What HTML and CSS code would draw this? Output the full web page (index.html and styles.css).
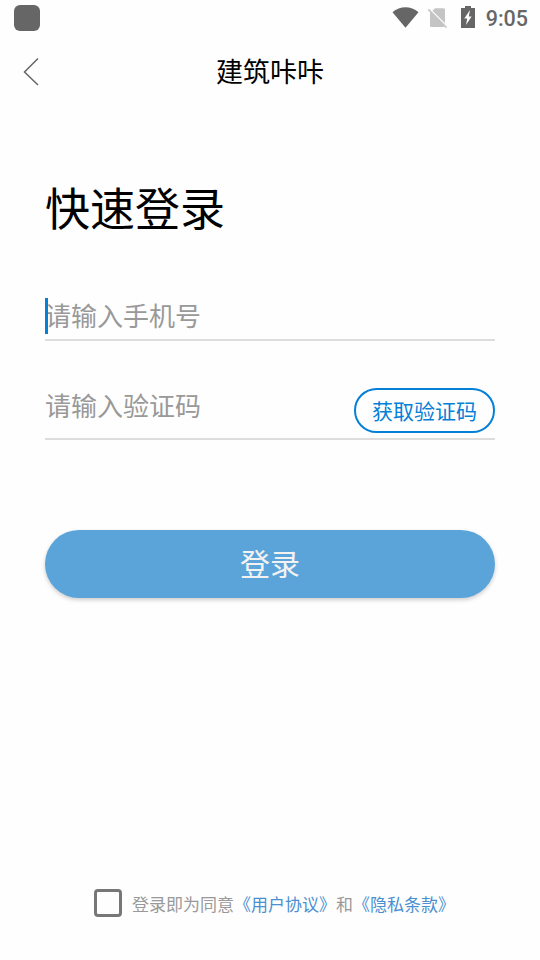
FILE: index.html
```html
<!DOCTYPE html>
<html lang="zh-CN">
<head>
<meta charset="utf-8">
<title>建筑咔咔</title>
<link rel="stylesheet" href="styles.css">
</head>
<body>
<div class="screen">
  <div class="status">
    <span class="status-app"></span>
    <svg class="status-icons" width="86" height="36" viewBox="0 0 86 36">
      <path fill="#666" d="M0.5 12.2C8 5.6 19 5.6 26.500 12.200L13.500 27.800Z"/>
      <path fill="#c4c4c4" d="M43 8.300H51.500Q53 8.300 53 9.800V23.300L40.500 10.800ZM38 11L53 26Q52 27 50 27H39.500Q38 27 38 25.500Z"/>
      <path stroke="#c4c4c4" stroke-width="1.700" d="M36.300 9.300L54.500 27.500"/>
      <path fill="#666" d="M69 8H73V6H79V8H83V28H69Z"/>
      <path fill="#fff" d="M78 10L72.300 18.500H75.200L74 25L79.600 16.400H76.800Z"/>
    </svg>
    <span class="clock">9:05</span>
  </div>
  <header class="navbar">
    <svg class="back" width="18" height="30" viewBox="0 0 18 30"><path d="M16 1.500L2.500 15L16 28" fill="none" stroke="#666" stroke-width="1.500"/></svg>
    <h1 class="nav-title">建筑咔咔</h1>
  </header>
  <main class="form">
    <h2 class="heading">快速登录</h2>
    <div class="field phone"><span class="caret"></span><span class="hint">请输入手机号</span></div>
    <div class="field code"><span class="hint">请输入验证码</span><button class="send">获取验证码</button></div>
    <button class="login">登录</button>
  </main>
  <footer class="terms">
    <span class="checkbox"></span>
    <p class="terms-text">登录即为同意<a>《用户协议》</a>和<a>《隐私条款》</a></p>
  </footer>
</div>
</body>
</html>
```
FILE: styles.css
```css
* { box-sizing: border-box; }
body { margin: 0; background: #fefefe; }
h1, h2, p { margin: 0; font-weight: 400; }
button { font-family: inherit; padding: 0; }
.screen {
  width: 540px;
  height: 960px;
  display: flex;
  flex-direction: column;
  font-family: "Noto Sans CJK SC", sans-serif;
  color: #000;
  white-space: nowrap;
}
.status {
  height: 36px;
  display: flex;
  align-items: center;
  padding: 0 12px 0 14px;
}
.status-app { width: 26px; height: 26px; border-radius: 6px; background: #666; }
.status-icons { margin-left: auto; }
.clock {
  width: 50px;
  text-align: right;
  font: 500 21.5px/36px Roboto, sans-serif;
  color: #666;
  padding-top: 2px;
}
.navbar {
  height: 72px;
  display: grid;
  grid-template-columns: 40px 1fr 40px;
  align-items: center;
}
.back { margin-left: 22px; }
.nav-title { font-size: 27px; line-height: 40px; text-align: center; padding-bottom: 2px; }
.form { padding: 0 45px; display: flex; flex-direction: column; }
.heading { margin-top: 66px; font-size: 45px; line-height: 66px; }
.field { display: flex; border-bottom: 2px solid #ddd; }
.hint { font-size: 26px; line-height: 36px; color: #999; }
.phone { height: 44px; margin-top: 57px; position: relative; }
.caret { position: absolute; left: 0; top: 1px; width: 3px; height: 36px; background: #0480d6; }
.code { height: 53px; margin-top: 46px; justify-content: space-between; }
.send {
  width: 141px;
  height: 45px;
  margin-top: 1px;
  border: 2px solid #0480d6;
  border-radius: 23px;
  background: #fefefe;
  color: #0480d6;
  font-size: 21px;
  line-height: 41px;
}
.login {
  height: 68px;
  margin-top: 90px;
  border: 0;
  border-radius: 34px;
  background: #5aa4da;
  color: #f2f2f2;
  font-size: 30px;
  line-height: 64px;
  padding-bottom: 4px;
  box-shadow: 0 2px 4px rgba(0, 0, 0, .2);
}
.terms { display: flex; align-items: center; margin: auto 0 43px 94px; }
.checkbox { width: 28px; height: 28px; border: 3px solid #777; border-radius: 4px; }
.terms-text { margin: 1px 0 -1px 10px; font-size: 17px; line-height: 28px; color: #999; }
.terms-text a { color: #4a8fd0; }
```
